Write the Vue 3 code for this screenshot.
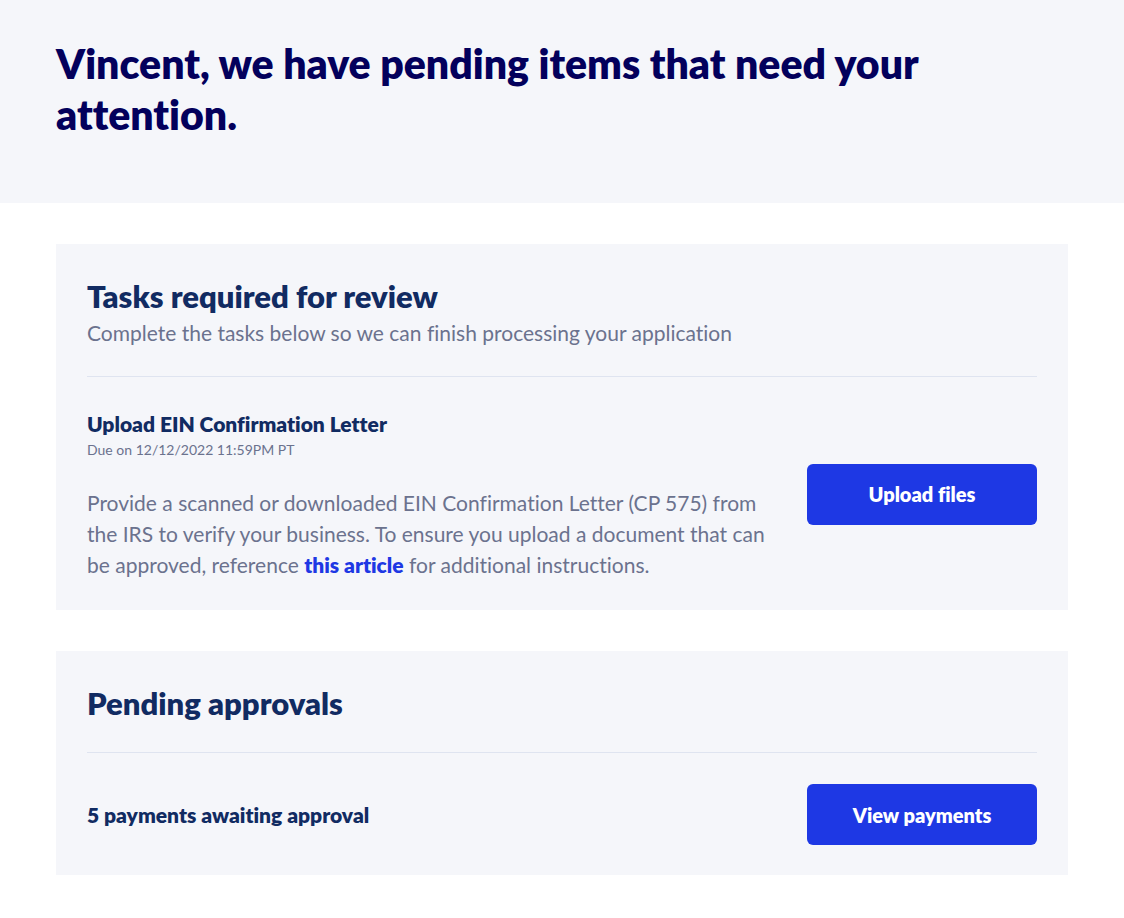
<template>
  <main class="dashboard">
    <header class="page-header">
      <h1>{{ firstName }}, we have pending items that need your attention.</h1>
    </header>

    <div class="page-content">
      <section class="card">
        <div class="card-header">
          <h2>Tasks required for review</h2>
          <p>Complete the tasks below so we can finish processing your application</p>
        </div>
        <div class="card-row">
          <div class="task-info">
            <h3>Upload EIN Confirmation Letter</h3>
            <p class="task-due">Due on 12/12/2022 11:59PM PT</p>
            <p class="task-description">
              Provide a scanned or downloaded EIN Confirmation Letter (CP 575) from the IRS to
              verify your business. To ensure you upload a document that can be approved, reference
              <a href="#">this article</a> for additional instructions.
            </p>
          </div>
          <button type="button" class="btn-primary">Upload files</button>
        </div>
      </section>

      <section class="card">
        <div class="card-header">
          <h2>Pending approvals</h2>
        </div>
        <div class="card-row">
          <h3>{{ pendingPayments }} payments awaiting approval</h3>
          <button type="button" class="btn-primary">View payments</button>
        </div>
      </section>
    </div>
  </main>
</template>

<script setup>
import { ref } from 'vue'

const firstName = ref('Vincent')
const pendingPayments = ref(5)
</script>

<style>
body {
  margin: 0;
  background-color: #fff;
}
</style>

<style scoped>
.dashboard {
  font-family: Lato, 'Open Sans', sans-serif;
  font-size: 21px;
  font-variant-ligatures: none;
  line-height: 31px;
  color: #6b728e;
}

h1,
h2,
h3,
p {
  margin: 0;
}

.page-header {
  padding: 38px 56px 63px;
  background-color: #f5f6fa;
}

h1 {
  font-size: 41px;
  font-weight: 800;
  line-height: 51px;
  color: #03005c;
}

.page-content {
  display: flex;
  flex-direction: column;
  gap: 41px;
  padding: 41px 56px;
}

.card {
  padding: 31px 31px 30px;
  background-color: #f5f6fa;
}

.card-header {
  padding-bottom: 28px;
  border-bottom: 1px solid #dfe4f0;
}

h2 {
  font-size: 31px;
  font-weight: 800;
  line-height: 42px;
  color: #112b62;
}

h3 {
  font-size: 21px;
  font-weight: 800;
  line-height: 32px;
  color: #112b62;
}

.card-row {
  display: flex;
  align-items: center;
  justify-content: space-between;
  gap: 31px;
  padding-top: 31px;
}

.task-info {
  flex: 1;
}

.task-due {
  font-size: 14px;
  line-height: 19px;
}

.task-description {
  margin-top: 28px;
}

.task-description a {
  font-weight: 800;
  color: #1e38e4;
  text-decoration: none;
}

.btn-primary {
  flex: none;
  width: 230px;
  height: 61px;
  padding: 0;
  border: none;
  border-radius: 6px;
  background-color: #1e38e4;
  font-family: inherit;
  font-size: 20px;
  font-weight: 800;
  font-variant-ligatures: none;
  color: #fff;
  cursor: pointer;
}

.btn-primary:hover {
  background-color: #172dbd;
}
</style>
